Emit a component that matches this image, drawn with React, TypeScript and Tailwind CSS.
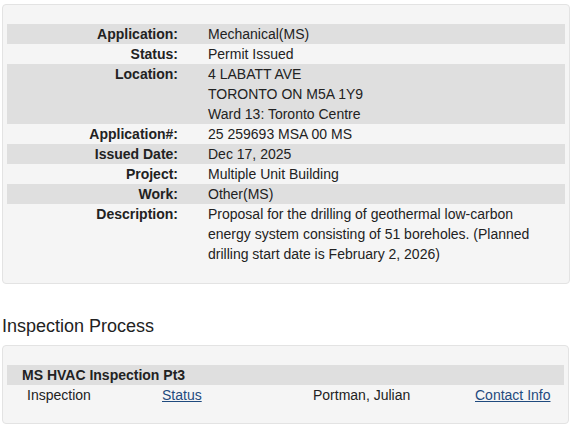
import React from "react"

const ROWS = [
    { label: "Application:", value: ["Mechanical(MS)"], shade: true },
    { label: "Status:", value: ["Permit Issued"], shade: false },
    { label: "Location:", value: ["4 LABATT AVE", "TORONTO ON M5A 1Y9", "Ward 13: Toronto Centre"], shade: true },
    { label: "Application#:", value: ["25 259693 MSA 00 MS"], shade: false },
    { label: "Issued Date:", value: ["Dec 17, 2025"], shade: true },
    { label: "Project:", value: ["Multiple Unit Building"], shade: false },
    { label: "Work:", value: ["Other(MS)"], shade: true },
    {
        label: "Description:",
        value: ["Proposal for the drilling of geothermal low-carbon energy system consisting of 51 boreholes. (Planned drilling start date is February 2, 2026)"],
        shade: false,
    },
]

export default function App() {
    return (
        <div className="min-h-[429px] bg-white text-[14px] leading-[20px] text-[#222]" style={{ fontFamily: '"Liberation Sans", Arial, sans-serif' }}>
            <div className="pt-[4px] px-[2px] pr-[3px]">
                {/* Permit details */}
                <div className="bg-[#f5f5f5] border border-[#e3e3e3] rounded-[4px] pt-[19px] pb-[19px] px-[4px]">
                    {ROWS.map((row, i) => (
                        <div key={i} className={"flex " + (row.shade ? "bg-[#dfdfdf]" : "")}>
                            <div className="w-[171px] shrink-0 text-right font-bold">{row.label}</div>
                            <div className="ml-[30px] w-[345px]">
                                {row.value.map((line, j) => (
                                    <div key={j}>{line}</div>
                                ))}
                            </div>
                        </div>
                    ))}
                </div>

                <h2 className="mt-[31px] text-[18px] leading-[22px] font-normal">Inspection Process</h2>

                {/* Inspections */}
                <div className="mt-[8px] bg-[#f5f5f5] border border-[#e3e3e3] rounded-[4px] pt-[19px] pb-[18px] px-[4px] mr-[1px]">
                    <div className="bg-[#dfdfdf] pl-[15px] font-bold">MS HVAC Inspection Pt3</div>
                    <div className="flex pl-[20px]">
                        <div className="w-[135px]">Inspection</div>
                        <div className="w-[151px]">
                            <a href="#" className="text-[#1f4a7e] underline">Status</a>
                        </div>
                        <div className="w-[162px]">Portman, Julian</div>
                        <div>
                            <a href="#" className="text-[#1f4a7e] underline">Contact Info</a>
                        </div>
                    </div>
                </div>
            </div>
        </div>
    )
}
